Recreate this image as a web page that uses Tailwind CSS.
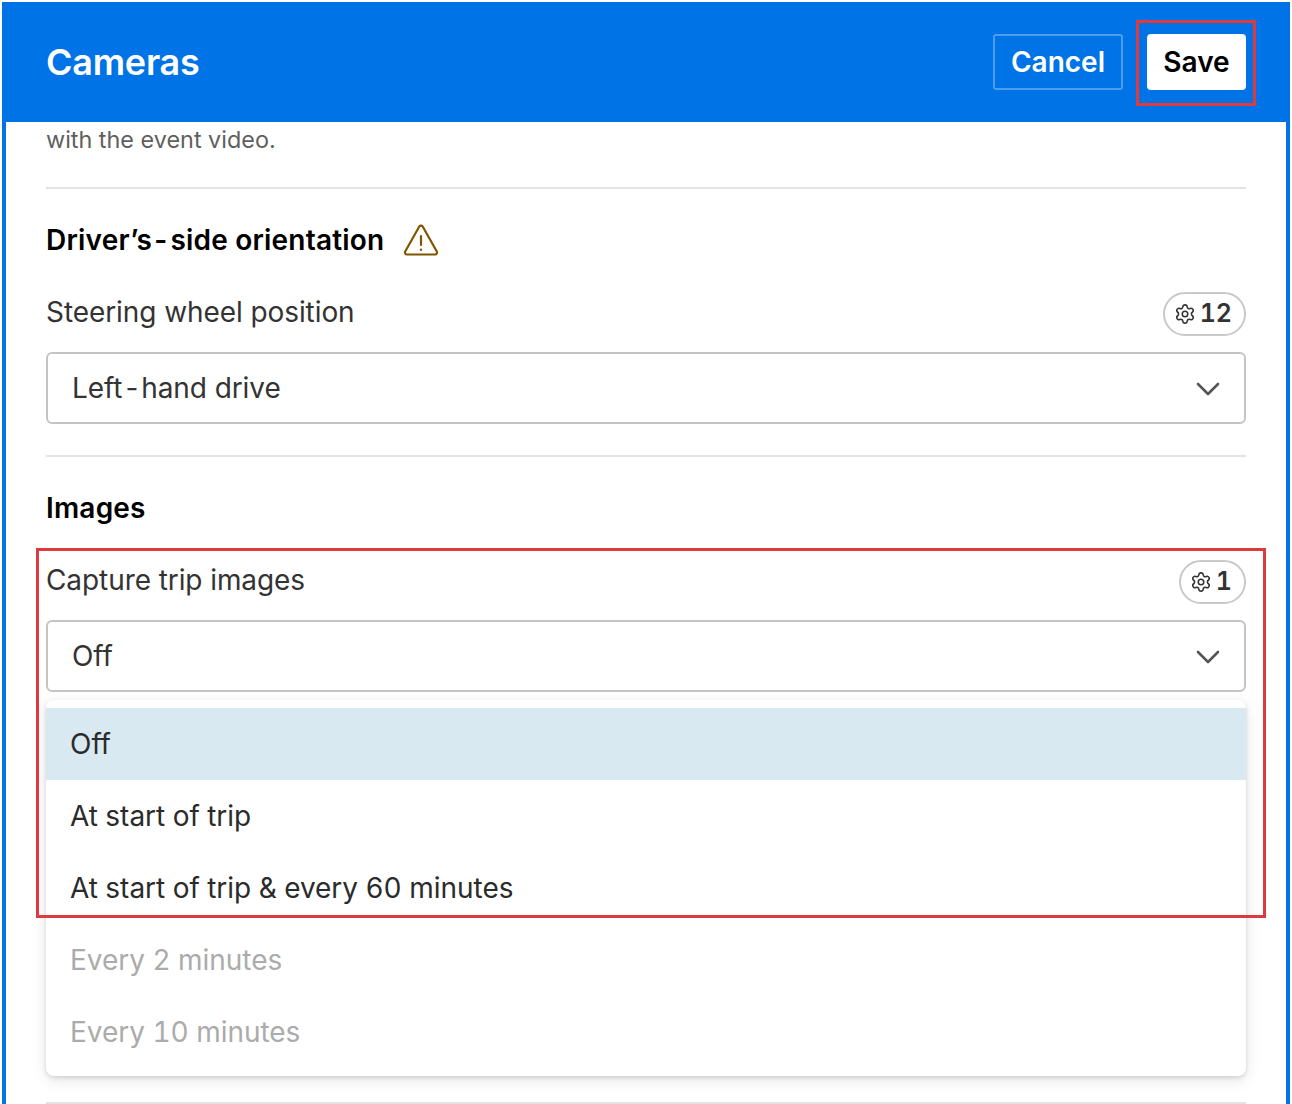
<!DOCTYPE html>
<html>
<head>
<meta charset="utf-8">
<script src="https://cdn.jsdelivr.net/npm/@tailwindcss/browser@4"></script>
</head>
<body class="bg-white">
<div class="relative w-[1292px] h-[1104px] overflow-hidden bg-white pt-[2px] pl-[2px] font-['Inter',sans-serif]">
  <div class="relative w-[1288px] h-[1102px] border-x-4 border-[#0073e6] bg-white">
    <header class="absolute left-[-4px] top-0 z-10 flex h-[120px] w-[1288px] items-center justify-between bg-[#0073e6] pl-[44px] pr-[44px]">
      <h1 class="text-[36px] font-semibold leading-none tracking-[-0.25px] text-white">Cameras</h1>
      <div class="flex items-center gap-[24px]">
        <button class="flex h-[56px] w-[130px] items-center justify-center rounded-[3px] border-2 border-white/30 text-[28px] font-semibold text-white">Cancel</button>
        <button class="flex h-[56px] w-[99px] items-center justify-center rounded-[4px] bg-white text-[28px] font-semibold text-black">Save</button>
      </div>
    </header>

    <main class="absolute inset-x-0 top-[120px] px-[40px]">
      <p class="mt-[4px] h-[32px] text-[23.4px] leading-[28px] text-[#5f5f5f]">with the event video.</p>
      <div class="mt-[29px] h-[2px] bg-[#e3e3e3]"></div>

      <div class="mt-[33px] flex h-[36px] items-center gap-[19px]">
        <h2 class="text-[28px] font-semibold tracking-[0.2px] text-black">Driver’s<span class="ml-[2px] mr-[3px]">-</span>side orientation</h2>
        <svg class="h-[36px] w-[36px]" viewBox="0 0 36 36" fill="none" stroke="#7f5500" stroke-width="2.2" stroke-linejoin="round" stroke-linecap="round">
          <path d="M16.3 4.5 a2 2 0 0 1 3.4 0 L33.8 29.5 a2 2 0 0 1 -1.7 3 H3.9 a2 2 0 0 1 -1.7 -3 Z"/>
          <path d="M18 14 V23"/><path d="M18 27.5 V28"/>
        </svg>
      </div>

      <div class="mt-[34px] flex h-[44px] items-center justify-between">
        <span class="pb-[4px] text-[28px] tracking-[-0.08px] text-[#333333]">Steering wheel position</span>
        <span class="flex h-[44px] items-center gap-[4px] rounded-full border-2 border-[#c9c9c9] pl-[9px] pr-[12px] text-[25px] font-semibold tabular-nums text-[#333333]">
          <svg class="h-[22px] w-[22px]" viewBox="0 0 24 24" fill="none" stroke="#333333" stroke-width="1.7" stroke-linecap="round" stroke-linejoin="round"><path d="M9.671 4.136a2.34 2.34 0 0 1 4.659 0 2.34 2.34 0 0 0 3.319 1.915 2.34 2.34 0 0 1 2.33 4.033 2.34 2.34 0 0 0 0 3.831 2.34 2.34 0 0 1-2.33 4.033 2.34 2.34 0 0 0-3.319 1.915 2.34 2.34 0 0 1-4.659 0 2.34 2.34 0 0 0-3.32-1.915 2.34 2.34 0 0 1-2.33-4.033 2.34 2.34 0 0 0 0-3.831A2.34 2.34 0 0 1 6.35 6.051a2.34 2.34 0 0 0 3.319-1.915"/><circle cx="12" cy="12" r="3"/></svg>
          12
        </span>
      </div>
      <div class="mt-[16px] flex h-[72px] items-center justify-between rounded-[6px] border-2 border-[#c4c4c4] pl-[24px] pr-[24px] text-[28px] tracking-[-0.08px] text-[#333333]">
        <span>Left<span class="mx-[3px]">-</span>hand drive</span>
        <svg class="h-[24px] w-[24px]" viewBox="0 0 24 24" fill="none" stroke="#555555" stroke-width="2.6" stroke-linecap="round" stroke-linejoin="round"><path d="M2 8 L12 18 L22 8"/></svg>
      </div>

      <div class="mt-[31px] h-[2px] bg-[#e3e3e3]"></div>

      <h2 class="mt-[33px] h-[36px] text-[28px] font-semibold leading-[36px] tracking-[0.2px] text-black">Images</h2>

      <div class="mt-[34px] flex h-[44px] items-center justify-between">
        <span class="pb-[4px] text-[28px] tracking-[-0.08px] text-[#333333]">Capture trip images</span>
        <span class="flex h-[44px] items-center gap-[4px] rounded-full border-2 border-[#c9c9c9] pl-[9px] pr-[12px] text-[25px] font-semibold tabular-nums text-[#333333]">
          <svg class="h-[22px] w-[22px]" viewBox="0 0 24 24" fill="none" stroke="#333333" stroke-width="1.7" stroke-linecap="round" stroke-linejoin="round"><path d="M9.671 4.136a2.34 2.34 0 0 1 4.659 0 2.34 2.34 0 0 0 3.319 1.915 2.34 2.34 0 0 1 2.33 4.033 2.34 2.34 0 0 0 0 3.831 2.34 2.34 0 0 1-2.33 4.033 2.34 2.34 0 0 0-3.319 1.915 2.34 2.34 0 0 1-4.659 0 2.34 2.34 0 0 0-3.32-1.915 2.34 2.34 0 0 1-2.33-4.033 2.34 2.34 0 0 0 0-3.831A2.34 2.34 0 0 1 6.35 6.051a2.34 2.34 0 0 0 3.319-1.915"/><circle cx="12" cy="12" r="3"/></svg>
          1
        </span>
      </div>
      <div class="mt-[16px] flex h-[72px] items-center justify-between rounded-[6px] border-2 border-[#c4c4c4] pl-[24px] pr-[24px] text-[28px] tracking-[-0.08px] text-[#333333]">
        <span>Off</span>
        <svg class="h-[24px] w-[24px]" viewBox="0 0 24 24" fill="none" stroke="#555555" stroke-width="2.6" stroke-linecap="round" stroke-linejoin="round"><path d="M2 8 L12 18 L22 8"/></svg>
      </div>

      <div class="mt-[8px] h-[376px] rounded-[8px] bg-white py-[8px] text-[28px] tracking-[-0.03px] tabular-nums shadow-[0_2px_4px_rgba(0,0,0,0.12),0_4px_16px_rgba(0,0,0,0.1)]">
        <div class="flex h-[72px] items-center bg-[#d9e9f1] pl-[24px] text-[#2b2b2b]">Off</div>
        <div class="flex h-[72px] items-center pl-[24px] text-[#2b2b2b]">At start of trip</div>
        <div class="flex h-[72px] items-center pl-[24px] text-[#2b2b2b]">At start of trip &amp; every 60 minutes</div>
        <div class="flex h-[72px] items-center pl-[24px] text-[#ababab]">Every 2 minutes</div>
        <div class="flex h-[72px] items-center pl-[24px] text-[#ababab]">Every 10 minutes</div>
      </div>
      <div class="mt-[26px] h-[2px] bg-[#e3e3e3]"></div>
    </main>
  </div>

  <div class="absolute left-[1136px] top-[20px] z-20 h-[86px] w-[120px] border-[3px] border-[#e03a3e]"></div>
  <div class="absolute left-[36px] top-[548px] z-20 h-[370px] w-[1230px] border-[3px] border-[#dc3a3e]"></div>
</div>
</body>
</html>
